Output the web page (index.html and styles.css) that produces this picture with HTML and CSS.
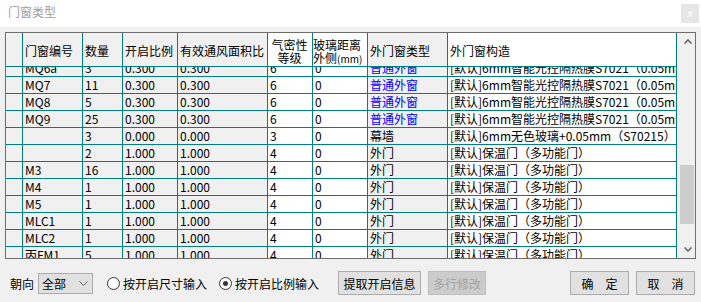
FILE: index.html
```html
<!DOCTYPE html>
<html lang="zh-CN">
<head>
    <meta charset="UTF-8">
    <meta name="viewport" content="width=device-width, initial-scale=1.0">
    <title>门窗类型</title>
    <link rel="stylesheet" href="styles.css">
</head>
<body>
    <!-- Title bar -->
    <div class="titlebar">
        <span class="title">门窗类型</span>
        <span class="close">x</span>
    </div>

    <!-- Door / window table -->
    <div class="grid-box">
        <div class="grid">
            <div class="row head">
                <div class="cell"></div>
                <div class="cell">门窗编号</div>
                <div class="cell">数量</div>
                <div class="cell">开启比例</div>
                <div class="cell">有效通风面积比</div>
                <div class="cell two center"><span>气密性<br>等级</span></div>
                <div class="cell two flush"><span>玻璃距离<br>外侧<span class="unit">(mm)</span></span></div>
                <div class="cell">外门窗类型</div>
                <div class="cell">外门窗构造</div>
            </div>

            <div class="grid-body">
                <div class="rows">
                    <div class="row">
                        <div class="cell"></div><div class="cell">MQ6a</div><div class="cell">3</div><div class="cell">0.300</div><div class="cell">0.300</div><div class="cell">6</div><div class="cell">0</div><div class="cell link">普通外窗</div><div class="cell">[默认]6mm智能光控隔热膜S7021（0.05m）+6mm</div>
                    </div>
                    <div class="row">
                        <div class="cell"></div><div class="cell">MQ7</div><div class="cell">11</div><div class="cell">0.300</div><div class="cell">0.300</div><div class="cell">6</div><div class="cell">0</div><div class="cell link">普通外窗</div><div class="cell">[默认]6mm智能光控隔热膜S7021（0.05m）+6mm</div>
                    </div>
                    <div class="row">
                        <div class="cell"></div><div class="cell">MQ8</div><div class="cell">5</div><div class="cell">0.300</div><div class="cell">0.300</div><div class="cell">6</div><div class="cell">0</div><div class="cell link">普通外窗</div><div class="cell">[默认]6mm智能光控隔热膜S7021（0.05m）+6mm</div>
                    </div>
                    <div class="row">
                        <div class="cell"></div><div class="cell">MQ9</div><div class="cell">25</div><div class="cell">0.300</div><div class="cell">0.300</div><div class="cell">6</div><div class="cell">0</div><div class="cell link">普通外窗</div><div class="cell">[默认]6mm智能光控隔热膜S7021（0.05m）+6mm</div>
                    </div>
                    <div class="row">
                        <div class="cell"></div><div class="cell"></div><div class="cell">3</div><div class="cell">0.000</div><div class="cell">0.000</div><div class="cell">3</div><div class="cell">0</div><div class="cell">幕墙</div><div class="cell">[默认]6mm无色玻璃+0.05mm（S70215）智能光控</div>
                    </div>
                    <div class="row">
                        <div class="cell"></div><div class="cell"></div><div class="cell">2</div><div class="cell">1.000</div><div class="cell">1.000</div><div class="cell">4</div><div class="cell">0</div><div class="cell">外门</div><div class="cell">[默认]保温门（多功能门）</div>
                    </div>
                    <div class="row">
                        <div class="cell"></div><div class="cell">M3</div><div class="cell">16</div><div class="cell">1.000</div><div class="cell">1.000</div><div class="cell">4</div><div class="cell">0</div><div class="cell">外门</div><div class="cell">[默认]保温门（多功能门）</div>
                    </div>
                    <div class="row">
                        <div class="cell"></div><div class="cell">M4</div><div class="cell">1</div><div class="cell">1.000</div><div class="cell">1.000</div><div class="cell">4</div><div class="cell">0</div><div class="cell">外门</div><div class="cell">[默认]保温门（多功能门）</div>
                    </div>
                    <div class="row">
                        <div class="cell"></div><div class="cell">M5</div><div class="cell">1</div><div class="cell">1.000</div><div class="cell">1.000</div><div class="cell">4</div><div class="cell">0</div><div class="cell">外门</div><div class="cell">[默认]保温门（多功能门）</div>
                    </div>
                    <div class="row">
                        <div class="cell"></div><div class="cell">MLC1</div><div class="cell">1</div><div class="cell">1.000</div><div class="cell">1.000</div><div class="cell">4</div><div class="cell">0</div><div class="cell">外门</div><div class="cell">[默认]保温门（多功能门）</div>
                    </div>
                    <div class="row">
                        <div class="cell"></div><div class="cell">MLC2</div><div class="cell">1</div><div class="cell">1.000</div><div class="cell">1.000</div><div class="cell">4</div><div class="cell">0</div><div class="cell">外门</div><div class="cell">[默认]保温门（多功能门）</div>
                    </div>
                    <div class="row">
                        <div class="cell"></div><div class="cell">丙FM1</div><div class="cell">5</div><div class="cell">1.000</div><div class="cell">1.000</div><div class="cell">4</div><div class="cell">0</div><div class="cell">外门</div><div class="cell">[默认]保温门（多功能门）</div>
                    </div>
                </div>
            </div>
        </div>

        <!-- Vertical scrollbar -->
        <div class="vscroll">
            <div class="arrow">
                <svg width="8" height="5" viewBox="0 0 8 5"><polyline points="0.5,4.5 4,1 7.5,4.5" fill="none" stroke="#606060" stroke-width="1.5"/></svg>
            </div>
            <div class="track"><div class="thumb"></div></div>
            <div class="arrow">
                <svg width="8" height="5" viewBox="0 0 8 5"><polyline points="0.5,0.5 4,4 7.5,0.5" fill="none" stroke="#606060" stroke-width="1.5"/></svg>
            </div>
        </div>
    </div>

    <!-- Bottom controls -->
    <div class="toolbar">
        <span class="label">朝向</span>
        <div class="select">
            <span>全部</span>
            <svg width="9" height="5" viewBox="0 0 9 5"><polyline points="0.5,0.5 4.5,4.5 8.5,0.5" fill="none" stroke="#666" stroke-width="1"/></svg>
        </div>
        <label class="radio"><span class="dot"></span>按开启尺寸输入</label>
        <label class="radio checked"><span class="dot"></span>按开启比例输入</label>
        <button class="btn btn-fetch">提取开启信息</button>
        <button class="btn btn-multi" disabled>多行修改</button>
        <button class="btn btn-ok">确　定</button>
        <button class="btn btn-cancel">取　消</button>
    </div>
</body>
</html>
```

FILE: styles.css
```css
/* General body styling */
body {
    margin: 0;
    width: 701px;
    height: 302px;
    overflow: hidden;
    background-color: #f0f0f0;
    font-family: "Noto Sans CJK SC", sans-serif;
    font-size: 12px;
    color: #000;
}

/* Title bar */
.titlebar {
    height: 27px;
    background-color: #fff;
    display: flex;
    justify-content: space-between;
    align-items: flex-start;
    padding: 0 2px 0 8px;
}

.title {
    margin-top: 3px;
    line-height: 17px;
    color: #a0a0a0;
}

.close {
    margin-top: 4px;
    width: 18px;
    height: 19px;
    line-height: 17px;
    text-align: center;
    background-color: #e6e6e6;
    color: #fff;
    font-size: 11px;
}

/* Table box */
.grid-box {
    display: flex;
    width: 689px;
    margin: 5px 0 0 5px;
    border: 1px solid #6e6e6e;
    background-color: #fff;
}

.grid {
    width: 671px;
}

.row {
    display: grid;
    grid-template-columns: 17px 60px 40px 55px 90px 45px 55px 80px 229px;
    height: 17px;
}

.cell {
    box-sizing: border-box;
    border-right: 1px solid #008080;
    border-bottom: 1px solid #008080;
    background-color: #f0f0f0;
    padding-left: 2px;
    line-height: 16px;
    white-space: nowrap;
    overflow: hidden;
}

/* editable columns are white */
.row .cell:nth-child(6),
.row .cell:nth-child(7),
.row .cell:nth-child(9) {
    background-color: #fff;
}

.cell.link {
    color: #0000ff;
}

.head {
    height: 34px;
}

.head .cell {
    display: flex;
    align-items: center;
    padding-top: 3px;
    background-color: #f0f0f0;
}

.head .cell.two {
    line-height: 13px;
}

.head .cell.center {
    justify-content: center;
    text-align: center;
    padding-right: 3px;
}

.head .cell.flush {
    padding-left: 0;
}

.unit {
    font-size: 10px;
}

.grid-body {
    height: 191px;
    overflow: hidden;
}

/* list is scrolled a few pixels down */
.rows {
    margin-top: -7px;
}

/* Scrollbar */
.vscroll {
    width: 18px;
    display: flex;
    flex-direction: column;
    background-color: #f0f0f0;
}

.arrow {
    height: 17px;
    display: flex;
    align-items: center;
    justify-content: center;
    padding-left: 3px;
}

.track {
    flex: 1;
}

.thumb {
    width: 14px;
    height: 59px;
    margin: 115px 0 0 3px;
    background-color: #cdcdcd;
}

/* Bottom controls */
.toolbar {
    display: flex;
    align-items: center;
    height: 24px;
    margin-top: 12px;
    padding: 0 6px 0 10px;
}

.label {
    margin-right: 4px;
}

.select {
    box-sizing: border-box;
    width: 55px;
    height: 21px;
    display: flex;
    align-items: center;
    justify-content: space-between;
    padding: 0 4px 0 3px;
    border: 1px solid #adadad;
    background-color: #e1e1e1;
}

.radio {
    display: flex;
    align-items: center;
    gap: 3px;
    margin-left: 14px;
}

.radio.checked {
    margin-left: 12px;
}

.dot {
    box-sizing: border-box;
    width: 13px;
    height: 13px;
    border: 1px solid #333;
    border-radius: 50%;
    background-color: #fff;
    display: flex;
    align-items: center;
    justify-content: center;
}

.radio.checked .dot::after {
    content: "";
    width: 5px;
    height: 5px;
    border-radius: 50%;
    background-color: #333;
}

.btn {
    box-sizing: border-box;
    height: 24px;
    padding: 0;
    border: 1px solid #adadad;
    background-color: #e1e1e1;
    font: inherit;
    color: #000;
}

.btn-fetch {
    width: 83px;
    margin-left: 19px;
}

.btn-multi {
    width: 58px;
    margin-left: 7px;
    background-color: #cccccc;
    border-color: #bfbfbf;
    color: #a3a3a3;
}

.btn-ok {
    width: 59px;
    margin-left: auto;
}

.btn-cancel {
    width: 59px;
    margin-left: 7px;
}
```
